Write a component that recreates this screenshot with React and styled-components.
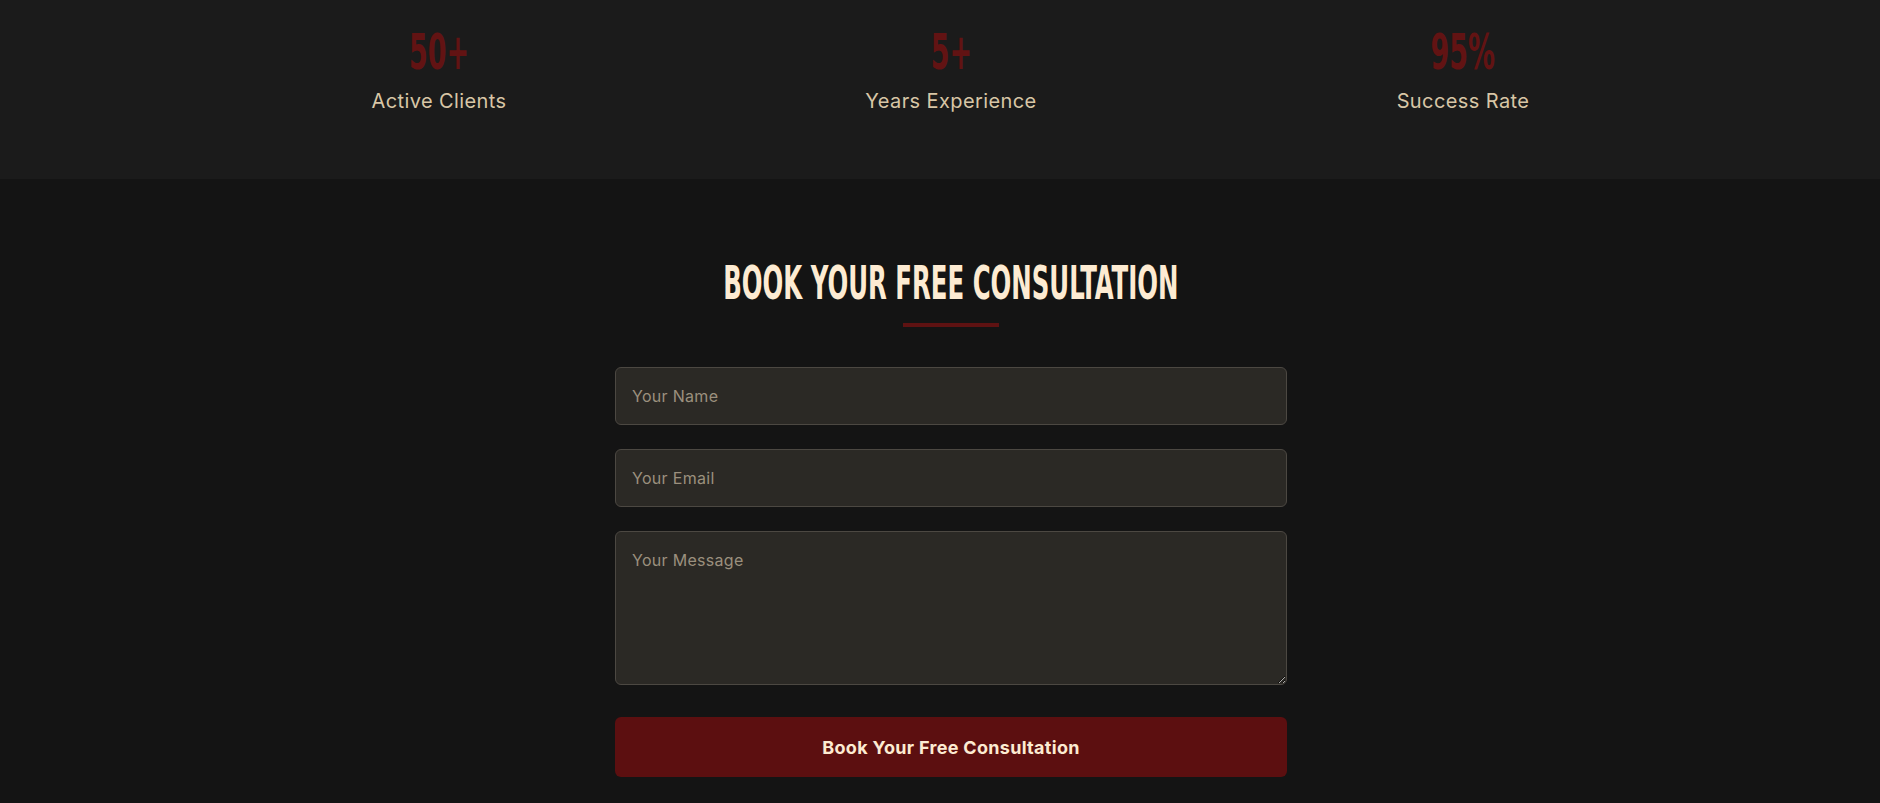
import React from "react";
import styled, { createGlobalStyle } from "styled-components";

const GlobalStyle = createGlobalStyle`
  html, body { margin: 0; padding: 0; background: #141414; }
  * { box-sizing: border-box; }
`;

const Page = styled.div`
  padding-left: 22px;
  font-family: "Inter", "Open Sans", sans-serif;
`;

const StatsSection = styled.section`
  height: 179px;
  margin-left: -22px;
  padding-left: 22px;
  background: #1b1b1b;
  padding-top: 24px;
`;

const StatsGrid = styled.div`
  max-width: 1536px;
  margin: 0 auto;
  display: grid;
  grid-template-columns: repeat(3, 1fr);
`;

const Stat = styled.div`
  display: flex;
  flex-direction: column;
  align-items: center;
`;

const StatNumber = styled.div`
  font-family: "Liberation Sans Narrow", "DejaVu Sans Condensed", sans-serif;
  font-weight: 700;
  font-size: 50px;
  line-height: 56px;
  color: #621313;
  transform: scaleX(0.6);
`;

const StatLabel = styled.div`
  margin-top: 7px;
  font-size: 20px;
  line-height: 28px;
  letter-spacing: 0.4px;
  color: #d8c6a6;
`;

const FormSection = styled.section`
  display: flex;
  flex-direction: column;
  align-items: center;
  padding-top: 76px;
  padding-bottom: 40px;
`;

const Title = styled.h2`
  margin: 0;
  font-family: "Liberation Sans Narrow", "DejaVu Sans Condensed", sans-serif;
  font-weight: 700;
  font-size: 46px;
  line-height: 56px;
  color: #fdebd2;
  transform: scaleX(0.59);
  white-space: nowrap;
`;

const Divider = styled.div`
  width: 96px;
  height: 4px;
  background: #5e1212;
  margin-top: 12px;
  margin-bottom: 40px;
`;

const Form = styled.form`
  width: 672px;
  display: flex;
  flex-direction: column;
  gap: 24px;
`;

const fieldCss = `
  width: 100%;
  display: block;
  background: #2b2925;
  border: 1px solid #4c4842;
  border-radius: 6px;
  padding: 16px;
  font-family: "Inter", "Open Sans", sans-serif;
  font-size: 16px;
  letter-spacing: 0.3px;
  line-height: 24px;
  color: #e8dcc6;
  outline: none;
  &::placeholder { color: #9b907e; }
`;

const Input = styled.input`
  ${fieldCss}
  height: 58px;
`;

const TextArea = styled.textarea`
  ${fieldCss}
  height: 154px;
  resize: vertical;
`;

const Button = styled.button`
  margin-top: 8px;
  height: 60px;
  width: 100%;
  background: #5c0f10;
  color: #fdebd2;
  border: none;
  border-radius: 6px;
  font-family: "Inter", "Open Sans", sans-serif;
  font-weight: 700;
  font-size: 18px;
  letter-spacing: 0.3px;
  cursor: pointer;
`;

const stats = [
  { n: "50+", l: "Active Clients" },
  { n: "5+", l: "Years Experience" },
  { n: "95%", l: "Success Rate" },
];

export default function App() {
  return (
    <Page>
      <GlobalStyle />
      <StatsSection>
        <StatsGrid>
          {stats.map((s) => (
            <Stat key={s.l}>
              <StatNumber>{s.n}</StatNumber>
              <StatLabel>{s.l}</StatLabel>
            </Stat>
          ))}
        </StatsGrid>
      </StatsSection>
      <FormSection>
        <Title>BOOK YOUR FREE CONSULTATION</Title>
        <Divider />
        <Form onSubmit={(e) => e.preventDefault()}>
          <Input type="text" placeholder="Your Name" />
          <Input type="email" placeholder="Your Email" />
          <TextArea rows={5} placeholder="Your Message" />
          <Button type="submit">Book Your Free Consultation</Button>
        </Form>
      </FormSection>
    </Page>
  );
}
